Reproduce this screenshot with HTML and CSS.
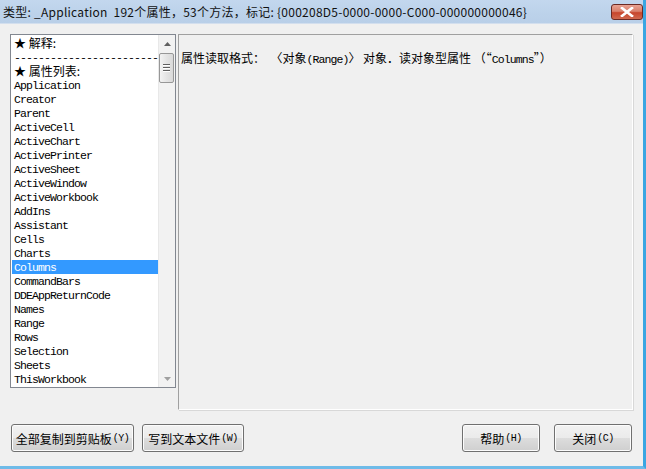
FILE: index.html
```html
<!DOCTYPE html>
<html>
<head>
<meta charset="utf-8">
<link rel="stylesheet" href="styles.css">
</head>
<body>
<div class="window">
  <div class="titlebar">
    <span class="title">类型: _Application&nbsp;&nbsp;192个属性，53个方法，标记: {000208D5-0000-0000-C000-000000000046}</span>
    <span class="close-btn">
      <svg width="16" height="10" viewBox="0 0 16 10"><path d="M3 1 L13 9 M13 1 L3 9" stroke="#fff" stroke-width="2.6" stroke-linecap="square"/></svg>
    </span>
  </div>
  <div class="client">
    <div class="main">
      <div class="listbox">
        <div class="items">
          <div class="item cjk">★ 解释:</div>
          <div class="item mono dashes">--------------------------------</div>
          <div class="item cjk">★ 属性列表:</div>
          <div class="item mono">Application</div>
          <div class="item mono">Creator</div>
          <div class="item mono">Parent</div>
          <div class="item mono">ActiveCell</div>
          <div class="item mono">ActiveChart</div>
          <div class="item mono">ActivePrinter</div>
          <div class="item mono">ActiveSheet</div>
          <div class="item mono">ActiveWindow</div>
          <div class="item mono">ActiveWorkbook</div>
          <div class="item mono">AddIns</div>
          <div class="item mono">Assistant</div>
          <div class="item mono">Cells</div>
          <div class="item mono">Charts</div>
          <div class="item mono selected">Columns</div>
          <div class="item mono">CommandBars</div>
          <div class="item mono">DDEAppReturnCode</div>
          <div class="item mono">Names</div>
          <div class="item mono">Range</div>
          <div class="item mono">Rows</div>
          <div class="item mono">Selection</div>
          <div class="item mono">Sheets</div>
          <div class="item mono">ThisWorkbook</div>
        </div>
        <div class="scrollbar">
          <div class="arrow up"><svg width="7" height="4" viewBox="0 0 7 4"><path d="M0 4 L3.5 0 L7 4 Z" fill="#606060"/></svg></div>
          <div class="track">
            <div class="thumb"><span class="grip"></span><span class="grip"></span><span class="grip"></span></div>
          </div>
          <div class="arrow down"><svg width="7" height="4" viewBox="0 0 7 4"><path d="M0 0 L7 0 L3.5 4 Z" fill="#a0a0a0"/></svg></div>
        </div>
      </div>
      <div class="panel">
        <div class="desc"><span class="cjk">属性读取格式：&nbsp;&nbsp;〈对象</span><span class="mono">(Range)</span><span class="cjk">〉&nbsp;对象．读对象型属性&nbsp;（“</span><span class="mono">Columns</span><span class="cjk">”）</span></div>
      </div>
    </div>
    <div class="buttons">
      <div class="left-buttons">
        <button class="btn btn-copy"><span class="cjk">全部复制到剪贴板</span><span class="mono small">(Y)</span></button>
        <button class="btn btn-write"><span class="cjk">写到文本文件</span><span class="mono small">(W)</span></button>
      </div>
      <div class="right-buttons">
        <button class="btn btn-help"><span class="cjk">帮助</span><span class="mono small">(H)</span></button>
        <button class="btn btn-close"><span class="cjk">关闭</span><span class="mono small">(C)</span></button>
      </div>
    </div>
  </div>
</div>
</body>
</html>
```

FILE: styles.css
```css
* { box-sizing: border-box; }
html, body { margin: 0; padding: 0; background: #f0f0f0; }
body { width: 646px; height: 469px; overflow: hidden; font-family: "Noto Sans CJK SC", "Liberation Sans", sans-serif; }

.window {
  width: 646px;
  height: 469px;
  display: flex;
  flex-direction: column;
  border-right: 3px solid #3aa6e2;
  border-bottom: 3px solid #6fbbe8;
  background: #f0f0f0;
}

.titlebar {
  height: 24px;
  flex: none;
  display: flex;
  align-items: center;
  justify-content: space-between;
  padding: 0 0 0 3px;
  background: linear-gradient(to bottom, #c3d7ee 0%, #bcd2ea 60%, #b9cfe8 100%);
  border-bottom: 1px solid #d3dfee;
}
.title {
  font-family: "Noto Sans CJK SC", "Liberation Sans", sans-serif;
  font-size: 12px;
  color: #111;
  white-space: nowrap;
  letter-spacing: 0.25px;
}
.close-btn {
  width: 32px;
  height: 16px;
  margin-top: 1px;
  border: 1px solid #6b2a24;
  border-radius: 3px;
  background: linear-gradient(to bottom, #e8a393 0%, #d9806c 45%, #c7452c 55%, #d0694f 100%);
  display: flex;
  align-items: center;
  justify-content: center;
}

.client {
  flex: 1;
  display: flex;
  flex-direction: column;
  padding: 10px 0 0 10px;
}
.main {
  display: flex;
  align-items: flex-start;
  gap: 2px;
}

.cjk { font-family: "Noto Sans CJK SC", sans-serif; font-size: 12px; }
.mono { font-family: "Liberation Mono", monospace; font-size: 11.5px; letter-spacing: -0.9px; }

.listbox {
  width: 166px;
  height: 354px;
  border: 1px solid #828790;
  background: #fff;
  display: flex;
}
.items {
  flex: 1;
  padding: 1px 0 0 1px;
  overflow: hidden;
}
.item {
  height: 14px;
  line-height: 14px;
  padding-left: 2px;
  color: #000;
  white-space: nowrap;
}
.item.mono { padding-top: 1px; line-height: 13px; overflow: hidden; }
.item.cjk { line-height: 14px; }
.item.selected { background: #3399ff; color: #fff; }

.scrollbar {
  width: 17px;
  flex: none;
  display: flex;
  flex-direction: column;
  background: #f2f2f2;
  border-left: 1px solid #e8e8e8;
}
.arrow {
  height: 17px;
  display: flex;
  align-items: center;
  justify-content: center;
}
.track { flex: 1; padding: 1px 1px 0 0; }
.thumb {
  height: 30px;
  width: 15px;
  border: 1px solid #979797;
  border-radius: 2px;
  background: linear-gradient(to right, #f3f3f3, #e4e4e4 50%, #d9d9d9);
  display: flex;
  flex-direction: column;
  align-items: center;
  justify-content: center;
  gap: 1px;
}
.grip { width: 7px; background: #606060; border-bottom: 1px solid #ffffff; height: 2px; }

.panel {
  width: 455px;
  height: 376px;
  border-top: 1px solid #a0a0a0;
  border-left: 1px solid #a0a0a0;
  border-right: 1px solid #ffffff;
  border-bottom: 1px solid #ffffff;
  box-shadow: 1px 1px 0 #d8d8d8;
  padding: 13px 0 0 2px;
}
.desc { color: #000; white-space: nowrap; line-height: 16px; }
.desc .cjk { font-size: 12px; }
.desc .mono { font-size: 11.5px; letter-spacing: -0.9px; }

.buttons {
  display: flex;
  justify-content: space-between;
  margin-top: 14px;
  padding-right: 11px;
}
.left-buttons, .right-buttons { display: flex; }
.left-buttons { margin-left: 1px; gap: 8px; }
.right-buttons { gap: 14px; }
.btn {
  height: 28px;
  border: 1px solid #707070;
  border-radius: 3px;
  background: linear-gradient(to bottom, #f2f2f2 0%, #ebebeb 49%, #dddddd 50%, #cfcfcf 100%);
  box-shadow: inset 0 0 0 1px #fcfcfc;
  padding: 0;
  display: flex;
  align-items: center;
  justify-content: center;
  color: #000;
  cursor: default;
}
.btn .small { font-size: 10px; letter-spacing: -0.5px; margin-left: 1px; }
.btn-copy { width: 123px; }
.btn-write { width: 102px; }
.btn-help { width: 78px; }
.btn-close { width: 78px; }
```
